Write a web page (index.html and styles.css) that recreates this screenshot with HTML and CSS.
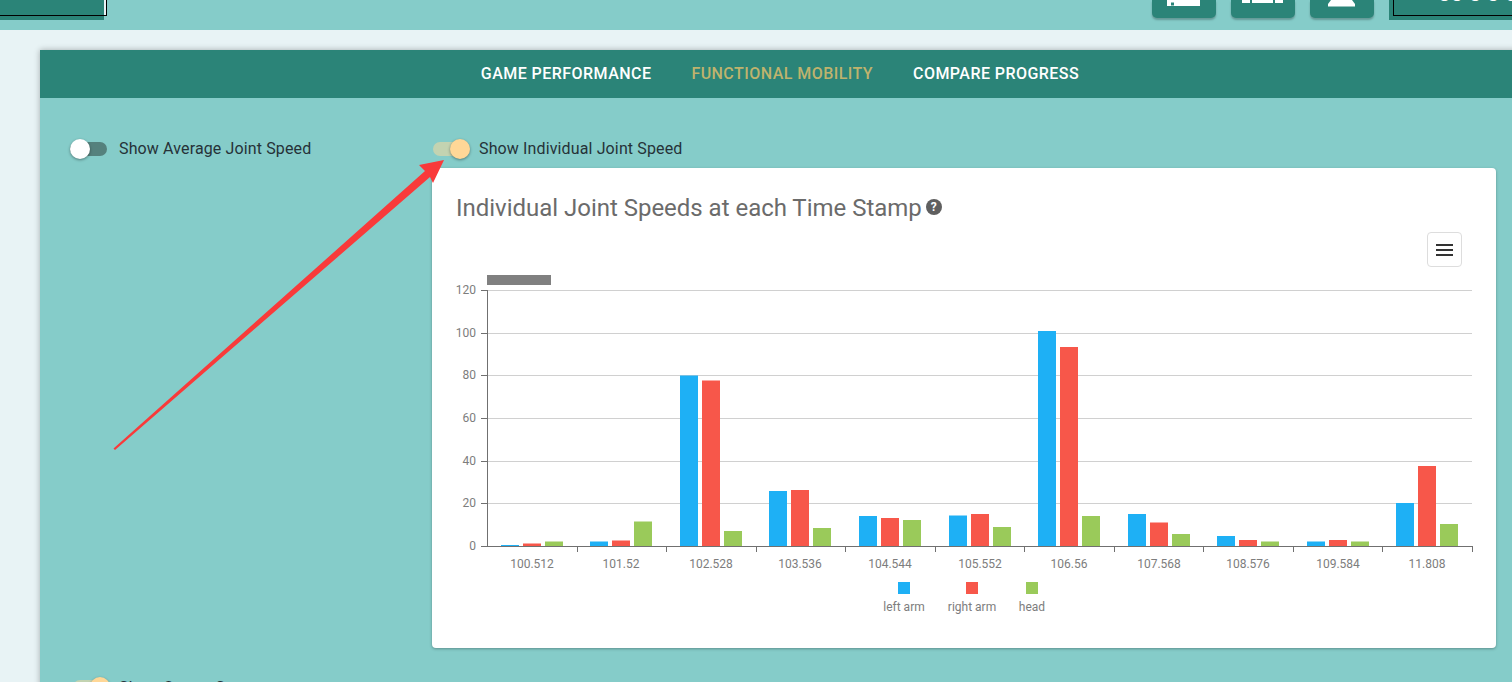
FILE: index.html
```html
<!DOCTYPE html>
<html lang="en">
<head>
    <meta charset="UTF-8">
    <meta name="viewport" content="width=device-width, initial-scale=1.0">
    <title>Functional Mobility</title>
    <link rel="stylesheet" href="styles.css">
</head>
<body>
    <header class="topbar">
        <div class="brand"><span class="brand-line"></span></div>
        <div class="top-actions">
            <button class="top-btn">
                <svg width="64" height="18" viewBox="0 0 64 18">
                    <path d="M15 0h33v6H15z" fill="#fff"/>
                    <path d="M19 2.500h3v3h-3z" fill="#2b8478"/>
                </svg>
            </button>
            <button class="top-btn">
                <svg width="64" height="18" viewBox="0 0 64 18">
                    <path d="M11 0h8v3h-8zM21 0h21v3H21zM44 0h8v3h-8z" fill="#fff"/>
                </svg>
            </button>
            <button class="top-btn">
                <svg width="64" height="18" viewBox="0 0 64 18">
                    <path d="M21 0h21l3 4v2.500H18V4z" fill="#fff"/>
                </svg>
            </button>
            <div class="clock"><span class="clock-line"></span><span class="clock-text">00 0 0 0</span></div>
        </div>
    </header>

    <main class="panel">
        <nav class="tabs">
            <a href="#">Game Performance</a>
            <a href="#" class="active">Functional Mobility</a>
            <a href="#">Compare Progress</a>
        </nav>

        <div class="content">
            <div class="col-left">
                <label class="switch-row">
                    <span class="switch"><span class="thumb"></span></span>
                    Show Average Joint Speed
                </label>
            </div>
            <div class="col-right">
                <label class="switch-row individual-row">
                    <span class="switch on"><span class="thumb"></span></span>
                    Show Individual Joint Speed
                </label>

                <section class="card">
                    <div class="card-title">
                        <h2>Individual Joint Speeds at each Time Stamp</h2>
                        <span class="help">?</span>
                    </div>
                    <div class="menu-row">
                        <button class="menu-btn"><span></span><span></span><span></span></button>
                    </div>
                    <svg class="chart" width="1064" height="364" viewBox="432 268 1064 364">
                        <rect x="487" y="275" width="64" height="10" fill="#808080"/>

                        <g stroke="#d0d0d0" stroke-width="1">
                            <path d="M487 290.500H1472M487 333.500H1472M487 375.500H1472M487 418.500H1472M487 461.500H1472M487 503.500H1472"/>
                        </g>
                        <g stroke="#707070" stroke-width="1" fill="none">
                            <path d="M487.500 290V546M481 290.500H487M481 333.500H487M481 375.500H487M481 418.500H487M481 461.500H487M481 503.500H487M481 546.500H1472"/>
                            <path d="M577.500 546V552M666.500 546V552M756.500 546V552M845.500 546V552M935.500 546V552M1024.500 546V552M1114.500 546V552M1203.500 546V552M1293.500 546V552M1382.500 546V552M1472.500 546V552"/>
                        </g>

                        <g class="axis-y" text-anchor="end">
                            <text x="476" y="294">120</text>
                            <text x="476" y="337">100</text>
                            <text x="476" y="379">80</text>
                            <text x="476" y="422">60</text>
                            <text x="476" y="465">40</text>
                            <text x="476" y="507">20</text>
                            <text x="476" y="550">0</text>
                        </g>

                        <!-- left arm -->
                        <g fill="#1eb0f5">
                            <rect x="501" y="545" width="18" height="1"/>
                            <rect x="590" y="541.500" width="18" height="4.500"/>
                            <rect x="680" y="375.500" width="18" height="170.500"/>
                            <rect x="769" y="491" width="18" height="55"/>
                            <rect x="859" y="516" width="18" height="30"/>
                            <rect x="949" y="515.500" width="18" height="30.500"/>
                            <rect x="1038" y="331" width="18" height="215"/>
                            <rect x="1128" y="514" width="18" height="32"/>
                            <rect x="1217" y="536" width="18" height="10"/>
                            <rect x="1307" y="541.500" width="18" height="4.500"/>
                            <rect x="1396" y="503" width="18" height="43"/>
                        </g>
                        <!-- right arm -->
                        <g fill="#f7574a">
                            <rect x="523" y="543.500" width="18" height="2.500"/>
                            <rect x="612" y="540.500" width="18" height="5.500"/>
                            <rect x="702" y="380.500" width="18" height="165.500"/>
                            <rect x="791" y="490" width="18" height="56"/>
                            <rect x="881" y="518" width="18" height="28"/>
                            <rect x="971" y="514" width="18" height="32"/>
                            <rect x="1060" y="347" width="18" height="199"/>
                            <rect x="1150" y="522.500" width="18" height="23.500"/>
                            <rect x="1239" y="540" width="18" height="6"/>
                            <rect x="1329" y="540" width="18" height="6"/>
                            <rect x="1418" y="466" width="18" height="80"/>
                        </g>
                        <!-- head -->
                        <g fill="#9aca5a">
                            <rect x="545" y="541.500" width="18" height="4.500"/>
                            <rect x="634" y="521.500" width="18" height="24.500"/>
                            <rect x="724" y="531" width="18" height="15"/>
                            <rect x="813" y="528" width="18" height="18"/>
                            <rect x="903" y="520" width="18" height="26"/>
                            <rect x="993" y="527" width="18" height="19"/>
                            <rect x="1082" y="516" width="18" height="30"/>
                            <rect x="1172" y="534" width="18" height="12"/>
                            <rect x="1261" y="541.500" width="18" height="4.500"/>
                            <rect x="1351" y="541.500" width="18" height="4.500"/>
                            <rect x="1440" y="524" width="18" height="22"/>
                        </g>

                        <g class="axis-x" text-anchor="middle">
                            <text x="532" y="568">100.512</text>
                            <text x="621" y="568">101.52</text>
                            <text x="711" y="568">102.528</text>
                            <text x="800" y="568">103.536</text>
                            <text x="890" y="568">104.544</text>
                            <text x="980" y="568">105.552</text>
                            <text x="1069" y="568">106.56</text>
                            <text x="1159" y="568">107.568</text>
                            <text x="1248" y="568">108.576</text>
                            <text x="1338" y="568">109.584</text>
                            <text x="1427" y="568">11.808</text>
                        </g>

                        <rect x="898" y="582" width="12" height="12" fill="#1eb0f5"/>
                        <rect x="966" y="582" width="12" height="12" fill="#f7574a"/>
                        <rect x="1026" y="582" width="12" height="12" fill="#9aca5a"/>
                        <g class="legend" text-anchor="middle">
                            <text x="904" y="611">left arm</text>
                            <text x="972" y="611">right arm</text>
                            <text x="1032" y="611">head</text>
                        </g>
                    </svg>
                </section>
            </div>
        </div>

        <label class="switch-row bottom-row">
            <span class="switch on"><span class="thumb"></span></span>
            Show Cursor Score
        </label>
    </main>

    <!-- annotation drawn over the screenshot -->
    <svg class="arrow" width="1512" height="682" viewBox="0 0 1512 682">
        <path d="M444 160L419 165L425 171L113.500 448.500L115 450L430 177L433 183z" fill="#f93a3a"/>
    </svg>
</body>
</html>
```

FILE: styles.css
```css
html, body {
    margin: 0;
    height: 682px;
    overflow: hidden;
}

body {
    background: #e8f3f5;
    font-family: Roboto, "Liberation Sans", sans-serif;
    color: #263238;
}

/* Top bar */
.topbar {
    height: 30px;
    background: #85ccc9;
    display: flex;
    justify-content: space-between;
    align-items: flex-start;
    overflow: hidden;
}

.brand {
    position: relative;
    width: 104px;
    height: 20px;
    background: #2b8478;
}

.brand-line {
    position: absolute;
    top: -2px;
    left: -2px;
    width: 108px;
    height: 17px;
    border: 1px solid #000;
    border-left: 0;
    border-top: 0;
}

.brand::after {
    content: "";
    position: absolute;
    top: 0;
    left: 104px;
    width: 2px;
    height: 15px;
    background: #e8f3f5;
}

.top-actions {
    display: flex;
    align-items: flex-start;
    gap: 15px;
}

.top-btn {
    width: 64px;
    height: 18px;
    padding: 0;
    border: 0;
    border-radius: 0 0 5px 5px;
    background: #2b8478;
    box-shadow: 0 2px 2px rgba(0, 0, 0, 0.25);
}

.top-btn svg {
    display: block;
}

.clock {
    position: relative;
    width: 123px;
    height: 20px;
    background: #2b8478;
    overflow: hidden;
}

.clock-line {
    position: absolute;
    top: -2px;
    left: 4px;
    width: 130px;
    height: 16px;
    border: 1px solid #000;
}

.clock-text {
    position: absolute;
    left: 49px;
    bottom: 16px;
    line-height: 20px;
    color: #fff;
    font-size: 22px;
    font-weight: bold;
    white-space: pre;
}

/* Main panel */
.panel {
    margin: 20px -8px 0 40px;
    height: 640px;
    background: #85ccc9;
    box-shadow: 0 0 6px rgba(0, 0, 0, 0.3);
}

.tabs {
    height: 46px;
    padding-bottom: 2px;
    background: #2b8478;
    display: flex;
    justify-content: center;
    align-items: center;
    gap: 40px;
}

.tabs a {
    color: #fff;
    font-size: 16px;
    font-weight: 500;
    letter-spacing: 0.45px;
    text-decoration: none;
    text-transform: uppercase;
}

.tabs a.active {
    color: #bfb36d;
}

.content {
    display: flex;
    padding: 41px 24px 0 30px;
}

.col-left {
    width: 362px;
}

.col-right {
    width: 1064px;
}

/* Switches */
.switch-row {
    display: flex;
    align-items: center;
    gap: 12px;
    height: 20px;
    font-size: 16px;
    line-height: 20px;
    letter-spacing: 0.13px;
}

.individual-row {
    margin-left: 1px;
    gap: 9px;
}

.switch {
    position: relative;
    display: block;
    width: 37px;
    height: 14px;
    border-radius: 7px;
    background: #55817d;
}

.thumb {
    position: absolute;
    top: -3px;
    left: 0;
    width: 20px;
    height: 20px;
    border-radius: 50%;
    background: #fff;
    box-shadow: 0 1px 3px rgba(0, 0, 0, 0.4);
}

.switch.on {
    background: #c3d3b1;
}

.switch.on .thumb {
    left: 17px;
    background: #ffd797;
}

.bottom-row {
    margin: 30px 0 0 33px;
    gap: 9px;
}

.bottom-row .switch {
    margin-top: -2px;
}

/* Chart card */
.card {
    margin-top: 9px;
    width: 1064px;
    height: 480px;
    background: #fff;
    border-radius: 4px;
    box-shadow: 0 1px 3px rgba(0, 0, 0, 0.3);
}

.card-title {
    display: flex;
    align-items: center;
    gap: 4px;
    padding: 24px 24px 0;
    height: 32px;
}

.card-title h2 {
    margin: 0;
    font-size: 24px;
    font-weight: 400;
    letter-spacing: -0.02px;
    color: #6b6b6b;
}

.help {
    display: block;
    width: 16px;
    height: 16px;
    margin-top: -2px;
    border-radius: 50%;
    background: #5f5f5f;
    color: #fff;
    font-size: 12px;
    font-weight: bold;
    line-height: 16px;
    text-align: center;
}

.menu-row {
    display: flex;
    justify-content: flex-end;
    padding: 8px 34px 0 0;
    height: 36px;
}

.menu-btn {
    width: 35px;
    height: 35px;
    padding: 0;
    background: #fff;
    border: 1px solid #ddd;
    border-radius: 4px;
    display: flex;
    flex-direction: column;
    justify-content: center;
    align-items: center;
    gap: 3px;
}

.menu-btn span {
    display: block;
    width: 17px;
    height: 2px;
    background: #333;
}

.chart {
    display: block;
}

.chart text {
    font-family: Roboto, "Liberation Sans", sans-serif;
    font-size: 12px;
    fill: #7d7d7d;
}

/* Annotation */
.arrow {
    position: absolute;
    top: 0;
    left: 0;
    pointer-events: none;
}
```
